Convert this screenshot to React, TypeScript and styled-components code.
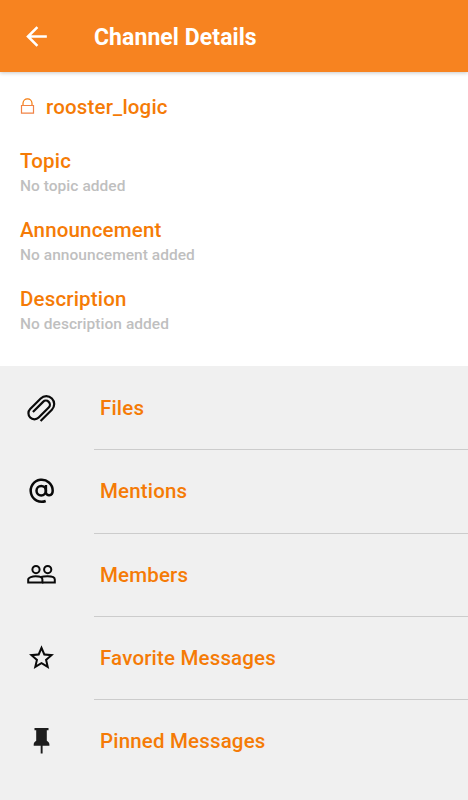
import React from "react";
import styled, { createGlobalStyle } from "styled-components";
import { MdArrowBack, MdStarBorder } from "react-icons/md";

const GlobalStyle = createGlobalStyle`
  * { box-sizing: border-box; }
  body { margin: 0; background: #f0f0f0; font-family: Roboto, "Liberation Sans", sans-serif; }
`;

const Page = styled.div`
  display: flex;
  flex-direction: column;
  height: 800px;
  overflow: hidden;
  background: #f0f0f0;
`;

const AppBar = styled.header`
  display: flex;
  align-items: center;
  height: 72px;
  padding: 0 0 0 21px;
  background: #f78320;
  color: #fff;
  box-shadow: 0 1px 4px rgba(0, 0, 0, 0.22);
  z-index: 1;
`;

const BackButton = styled.button`
  display: flex;
  width: 73px;
  padding: 0;
  border: 0;
  background: none;
  color: inherit;
`;

const Title = styled.h1`
  margin: 0;
  padding-top: 3px;
  font-size: 23px;
  line-height: 30px;
  font-weight: 700;
  letter-spacing: 0.07px;
  white-space: nowrap;
`;

const Info = styled.section`
  height: 294px;
  padding: 21px 20px 0;
  background: #fff;
`;

const Channel = styled.div`
  display: flex;
  align-items: center;
  height: 28px;
  gap: 11px;
  margin-bottom: 27px;
`;

const Label = styled.h2`
  margin: 0;
  font-size: 20.5px;
  line-height: 26px;
  font-weight: 500;
  letter-spacing: 0.17px;
  color: #f57b06;
  white-space: nowrap;
`;

const Field = styled.div`
  height: 69px;
`;

const Empty = styled.p`
  margin: 2px 0 0;
  font-size: 15.5px;
  line-height: 20px;
  font-weight: 500;
  letter-spacing: 0.04px;
  color: #bfbfbf;
`;

const Menu = styled.nav`
  display: flex;
  flex-direction: column;
  padding-top: 1px;
`;

const Row = styled.a`
  display: flex;
  height: 83.33px;
`;

const IconCell = styled.span`
  display: flex;
  align-items: center;
  flex: 0 0 94px;
  padding-left: 25px;
  color: #0a0a0a;
`;

const RowBody = styled.span<{ $last: boolean }>`
  display: flex;
  align-items: center;
  flex: 1;
  padding: 0 0 0 6px;
  border-bottom: 1px solid ${(p) => (p.$last ? "transparent" : "#cccccc")};
`;

const LockIcon = () => (
  <svg width="15" height="18" viewBox="0 0 15 18" fill="none" stroke="#f18345" strokeWidth="1.2">
    <path d="M1.5 7.5h12v7.7h-12z" />
    <path d="M3 7V5.3a4.5 4.5 0 0 1 9 0V7" stroke="#f57a0b" />
  </svg>
);

const ClipIcon = () => (
  <svg width="33" height="33" viewBox="-16.5 -16.5 33 33" fill="none" stroke="currentColor" strokeWidth="2.2">
    <path
      transform="rotate(-45)"
      d="M-9.5 8.2H6.5A7.9 7.9 0 0 0 6.5-7.6H-8.4A6 6 0 0 0-8.4 4.4H5.8A4 4 0 0 0 5.8-3.6H-8.5"
    />
  </svg>
);

const AtIcon = () => (
  <svg width="33" height="33" viewBox="0 0 33 33" fill="none" stroke="currentColor" strokeWidth="2.5">
    <circle cx="16.2" cy="15.7" r="4.7" />
    <path d="M20.9 10v7.3c0 4 6.8 4.2 6.8-1.6a11 11 0 1 0-7 10.3" />
  </svg>
);

const MembersIcon = () => (
  <svg width="33" height="33" viewBox="0 0 33 33" fill="none" stroke="currentColor" strokeWidth="2">
    <circle cx="11" cy="10.6" r="3.6" />
    <circle cx="22.7" cy="10.6" r="3.6" />
    <path d="M3.2 23.5v-3c0-2.2 4.4-3.2 7.4-3.2s6.8 1 6.8 3.2v3z" />
    <path d="M16 18c1.6-.5 3.7-.7 6.5-.7 3.2 0 7.3 1 7.3 3.2v3H17" />
  </svg>
);

const PinIcon = () => (
  <svg width="33" height="33" viewBox="0 0 33 33" fill="#1d1d1d">
    <path d="M9.5 3h14v2.3h-1.7v10.5c1.4.9 2.6 2 2.6 3.6v1.3h-6.8v7.8h-1.9v-7.8H8.7v-1.3c0-1.6 1.2-2.7 2.5-3.6V5.3H9.5z" />
  </svg>
);

const fields = [
  { label: "Topic", empty: "No topic added" },
  { label: "Announcement", empty: "No announcement added" },
  { label: "Description", empty: "No description added" },
];

const items = [
  { label: "Files", icon: <ClipIcon /> },
  { label: "Mentions", icon: <AtIcon /> },
  { label: "Members", icon: <MembersIcon /> },
  { label: "Favorite Messages", icon: <MdStarBorder size={30} viewBox="-1.2 1 24 24" /> },
  { label: "Pinned Messages", icon: <PinIcon /> },
];

export default function App() {
  return (
    <>
      <GlobalStyle />
      <Page>
        <AppBar>
          <BackButton aria-label="Back">
            <MdArrowBack size={31} />
          </BackButton>
          <Title>Channel Details</Title>
        </AppBar>
        <Info>
          <Channel>
            <LockIcon />
            <Label>rooster_logic</Label>
          </Channel>
          {fields.map((f) => (
            <Field key={f.label}>
              <Label>{f.label}</Label>
              <Empty>{f.empty}</Empty>
            </Field>
          ))}
        </Info>
        <Menu>
          {items.map((item, i) => (
            <Row key={item.label}>
              <IconCell>{item.icon}</IconCell>
              <RowBody $last={i === items.length - 1}>
                <Label>{item.label}</Label>
              </RowBody>
            </Row>
          ))}
        </Menu>
      </Page>
    </>
  );
}
